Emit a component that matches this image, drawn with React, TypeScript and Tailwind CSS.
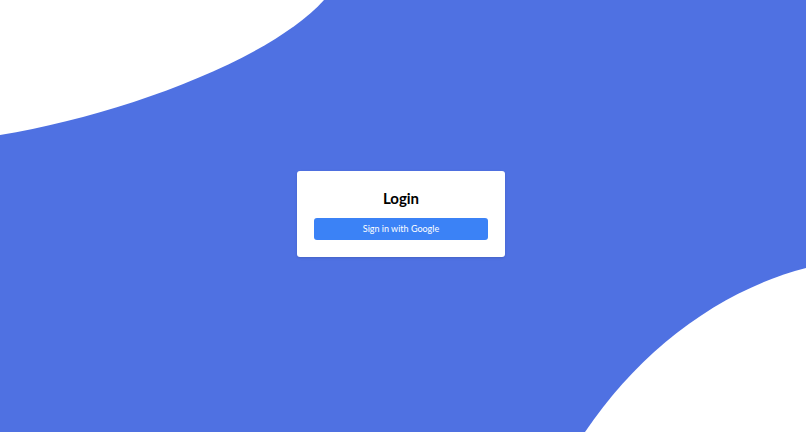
import React from "react";

export default function App() {
  return (
    <div className="relative flex h-[432px] w-full items-center justify-center overflow-hidden bg-[#4f71e2] pb-[5px] pr-[4px] font-['Lato','Liberation_Sans',sans-serif]">
      <svg
        className="absolute inset-0 h-full w-full"
        viewBox="0 0 806 432"
        preserveAspectRatio="none"
      >
        <path d="M0,0 L324,0 C270,60 120,115 0,135 Z" fill="#ffffff" />
        <path d="M806,268 C720,290 640,350 585,432 L806,432 Z" fill="#ffffff" />
      </svg>
      <div className="relative z-10 flex w-[208px] flex-col items-center rounded-[3px] bg-white p-[17px] shadow-sm">
        <h1 className="mb-[10px] text-[15px] font-bold leading-[20px] text-black">Login</h1>
        <button className="h-[22px] w-full rounded-[3px] bg-[#3b82f6] text-[9px] text-white">
          Sign in with Google
        </button>
      </div>
    </div>
  );
}
